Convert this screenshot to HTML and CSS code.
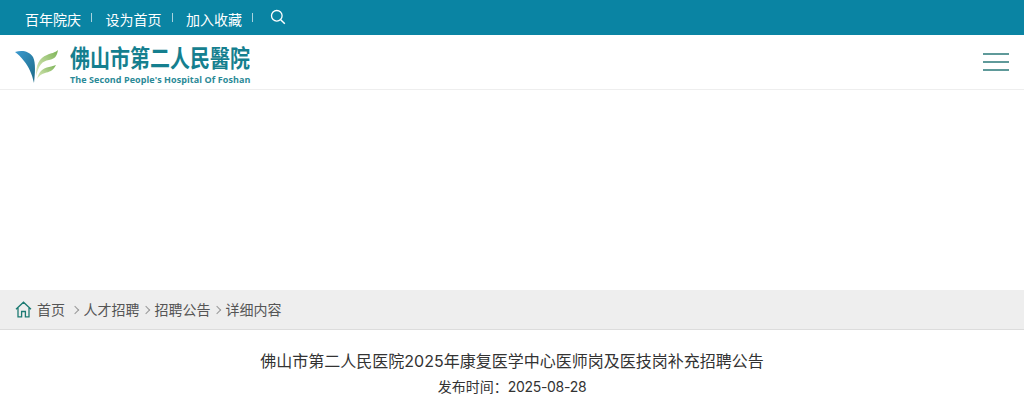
FILE: index.html
```html
<!DOCTYPE html>
<html lang="zh-CN">
<head>
  <meta charset="UTF-8" />
  <title>佛山市第二人民医院</title>
  <link rel="stylesheet" href="styles.css">
</head>
<body>

  <div class="topbar">
    <a class="top-link">百年院庆</a>
    <a class="top-link">设为首页</a>
    <a class="top-link">加入收藏</a>
    <svg class="search-icon" width="16" height="16" viewBox="0 0 16 16">
      <circle cx="6.8" cy="6.8" r="5.3" fill="none" stroke="#fff" stroke-width="1.3"/>
      <path d="M10.7 10.7 L14.8 14.8" stroke="#fff" stroke-width="1.5"/>
    </svg>
  </div>

  <div class="header">
    <div class="logo">
      <svg class="logo-mark" width="44" height="34" viewBox="0 0 44 34">
        <defs>
          <linearGradient id="blue" x1="0" y1="0" x2="1" y2="1">
            <stop offset="0" stop-color="#3c9ad0"/>
            <stop offset="1" stop-color="#1b6a86"/>
          </linearGradient>
          <linearGradient id="green" x1="0" y1="1" x2="1" y2="0">
            <stop offset="0" stop-color="#e0ecc0"/>
            <stop offset="1" stop-color="#7cb356"/>
          </linearGradient>
        </defs>
        <path d="M0 2 C7 0 14 1 18 7 C21 13 20 24 19 33 C17 24 14 17 9 11 C6 7 3 4 0 2 Z" fill="url(#blue)"/>
        <path d="M21 26 C21 15 24 8 32 5 C36 3 40 3 43 0 C42 6 40 9 34 10 C27 11 24 15 21 26 Z" fill="url(#green)"/>
        <path d="M22 29 C24 21 28 18 34 17 C37 16 39 16 41 15 C38 21 34 22 30 23 C26 24 24 26 22 29 Z" fill="url(#green)"/>
      </svg>
      <div class="logo-text">
        <div class="logo-cn">佛山市第二人民醫院</div>
        <div class="logo-en">The Second People's Hospital Of Foshan</div>
      </div>
    </div>
    <div class="menu-btn">
      <span></span>
      <span></span>
      <span></span>
    </div>
  </div>

  <div class="banner"></div>

  <div class="crumbs">
    <svg class="home-icon" width="17" height="17" viewBox="0 0 17 17">
      <path d="M1 8.3 L8.5 1.2 L16 8.3 M3 7 V15.8 H6.6 V10.5 H10.4 V15.8 H14 V7" fill="none" stroke="#1c7a72" stroke-width="1.3"/>
    </svg>
    <a class="crumb crumb-home">首页</a>
    <i class="sep"></i>
    <a class="crumb">人才招聘</a>
    <i class="sep"></i>
    <a class="crumb">招聘公告</a>
    <i class="sep"></i>
    <a class="crumb">详细内容</a>
  </div>

  <div class="article">
    <h1>佛山市第二人民医院2025年康复医学中心医师岗及医技岗补充招聘公告</h1>
    <p>发布时间：<span class="date">2025-08-28</span></p>
  </div>

</body>
</html>
```

FILE: styles.css
```css
html, body {
  margin: 0;
  padding: 0;
  background: #fff;
  font-family: Inter, "Noto Sans CJK SC", sans-serif;
  overflow: hidden;
}

.topbar {
  height: 35px;
  background: #0a84a3;
  display: flex;
  align-items: center;
  padding-left: 25px;
  box-sizing: border-box;
}

.top-link {
  color: #fff;
  font-size: 14px;
  line-height: 20px;
  padding-right: 11px;
  margin-right: 13.5px;
  position: relative;
  top: 2px;
}

.top-link::after {
  content: "";
  position: absolute;
  right: 0;
  top: 3px;
  width: 1px;
  height: 9px;
  background: #a8d3de;
}

.search-icon {
  margin-left: 3.5px;
  margin-bottom: 1px;
}

.header {
  height: 55px;
  box-sizing: border-box;
  border-bottom: 1px solid #eee;
  display: flex;
  align-items: center;
  justify-content: space-between;
  padding: 0 15px;
}

.logo {
  display: flex;
  align-items: flex-start;
  gap: 11px;
}

.logo-mark {
  margin-top: 11px;
}

.logo-text {
  padding-top: 5px;
  width: 182px;
}

.logo-cn {
  font-family: "Noto Sans CJK TC", sans-serif;
  font-weight: 700;
  font-size: 20px;
  line-height: 26px;
  color: #157f8f;
  white-space: nowrap;
  transform: scaleY(1.2);
}

.logo-en {
  font-family: "Open Sans", sans-serif;
  font-weight: 700;
  font-size: 9px;
  letter-spacing: 0.07px;
  line-height: 12px;
  margin-top: 4px;
  color: #2b8a97;
  white-space: nowrap;
}

.menu-btn {
  width: 26px;
  display: flex;
  flex-direction: column;
  gap: 6px;
}

.menu-btn span {
  display: block;
  height: 2px;
  background: #5f9a9a;
}

.banner {
  height: 200px;
  background: #fff;
}

.crumbs {
  height: 40px;
  box-sizing: border-box;
  background: #eeeeee;
  border-bottom: 1px solid #dcdcdc;
  display: flex;
  align-items: center;
  padding-left: 15px;
  color: #555;
  font-size: 14px;
}

.home-icon {
  margin-right: 5px;
}

.crumb {
  line-height: 20px;
}

.crumb-home {
  margin-right: 3.5px;
}

.sep {
  width: 5px;
  height: 5px;
  border-top: 1px solid #999;
  border-right: 1px solid #999;
  transform: rotate(45deg);
  margin: 0 6px 0 3px;
}

.article {
  text-align: center;
  padding-top: 19px;
  color: #333;
}

.article h1 {
  margin: 0;
  font-size: 16px;
  font-weight: 400;
  line-height: 24px;
}

.article p {
  margin: 2px 0 0;
  font-size: 14px;
  line-height: 24px;
}

.date {
  letter-spacing: -0.3px;
}
```
